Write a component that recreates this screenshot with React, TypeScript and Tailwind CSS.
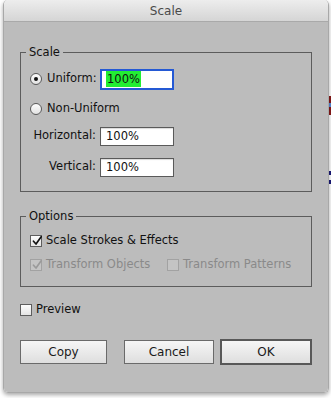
import React from "react";

const font = { fontFamily: '"DejaVu Sans", "Liberation Sans", sans-serif' };

function Check({ disabled }: { disabled?: boolean }) {
    return (
        <svg width="10" height="10" viewBox="0 0 10 10" className="absolute left-[1px] top-[0px]">
            <path
                d="M1.5 5.2 L4 8 L9.2 0.8"
                fill="none"
                stroke={disabled ? "#9a9a9a" : "#111"}
                strokeWidth="1.7"
                strokeLinecap="round"
                strokeLinejoin="round"
            />
        </svg>
    );
}

function CheckBox({ checked, disabled }: { checked?: boolean; disabled?: boolean }) {
    return (
        <span
            className={
                "relative inline-block w-[12px] h-[12px] shrink-0 border " +
                (disabled
                    ? "border-[#a2a2a2] bg-[#c4c4c4]"
                    : "border-[#5e5e5e] bg-gradient-to-b from-[#fdfdfd] to-[#e4e4e4]")
            }
        >
            {checked && <Check disabled={disabled} />}
        </span>
    );
}

function Radio({ checked }: { checked?: boolean }) {
    return (
        <span className="relative flex items-center justify-center w-[12px] h-[12px] shrink-0 rounded-full border border-[#5a5a5a] bg-gradient-to-b from-[#fdfdfd] to-[#e2e2e2]">
            {checked && <span className="w-[4px] h-[4px] rounded-full bg-[#111]" />}
        </span>
    );
}

function Field({ value, focused }: { value: string; focused?: boolean }) {
    if (focused) {
        return (
            <div className="w-[74px] h-[21px] border-2 border-[#2459d4] bg-white flex items-center pl-[4px]">
                <span className="bg-[#22ee33] text-[#111] leading-[16px] px-[1px]">{value}</span>
            </div>
        );
    }
    return (
        <div className="w-[74px] h-[19px] border border-[#5a5a5a] bg-white flex items-center pl-[5px] shadow-[inset_0_1px_1px_rgba(0,0,0,0.15)]">
            <span className="text-[#111] leading-[15px]">{value}</span>
        </div>
    );
}

function Button({ label, primary }: { label: string; primary?: boolean }) {
    return (
        <button
            className={
                "flex items-center justify-center bg-gradient-to-b from-[#f6f6f6] to-[#dedede] text-[#1a1a1a] text-[12px] " +
                (primary
                    ? "w-[92px] h-[26px] border-2 border-[#585858]"
                    : "w-[90px] h-[24px] border border-[#6a6a6a]")
            }
        >
            {label}
        </button>
    );
}

export default function App() {
    return (
        <div className="relative w-[331px] h-[398px] bg-white overflow-hidden" style={font}>
            {/* bits of the document behind the dialog */}
            <span className="absolute left-[33px] top-0 w-[5px] h-[3px] bg-[#1d5a1d]" />
            <span className="absolute right-0 top-[96px] w-[2px] h-[7px] bg-[#8a1a1a]" />
            <span className="absolute right-0 top-[103px] w-[2px] h-[4px] bg-[#5a8ad8]" />
            <span className="absolute right-0 top-[107px] w-[2px] h-[8px] bg-[#8a1a1a]" />
            <span className="absolute right-0 top-[171px] w-[2px] h-[4px] bg-[#1a1a7a]" />
            <span className="absolute right-0 top-[180px] w-[2px] h-[4px] bg-[#1a1a7a]" />

            {/* Window */}
            <div className="relative ml-[3px] w-[326px] h-[393px] rounded-[5px] overflow-hidden flex flex-col shadow-[0_2px_4px_rgba(0,0,0,0.35)] border-x border-b border-[#a8a8a8]">
                {/* Title bar */}
                <div className="h-[22px] shrink-0 flex items-center justify-center bg-gradient-to-b from-[#ededed] to-[#d5d5d5] border-b border-[#a9a9a9]">
                    <span className="text-[12px] text-[#4a4a4a]">Scale</span>
                </div>

                {/* Body */}
                <div className="flex-1 bg-[#bcbcbc] px-[16px] pt-[23px] text-[11.5px] text-[#111]">
                    {/* Scale group */}
                    <fieldset className="border border-[#5c5c5c] pb-[14px]">
                        <legend className="ml-[5px] px-[3px] leading-[15px]">Scale</legend>
                        <div className="flex flex-col pt-[8px]">
                            <div className="flex items-center h-[22px]">
                                <div className="w-[79px] flex items-center gap-[5px] pl-[9px]">
                                    <Radio checked />
                                    <span>Uniform:</span>
                                </div>
                                <Field value="100%" focused />
                            </div>
                            <div className="flex items-center h-[20px] mt-[9px]">
                                <div className="flex items-center gap-[5px] pl-[9px]">
                                    <Radio />
                                    <span>Non-Uniform</span>
                                </div>
                            </div>
                            <div className="flex items-center h-[20px] mt-[7px]">
                                <div className="w-[79px] text-right pr-[4px]">Horizontal:</div>
                                <Field value="100%" />
                            </div>
                            <div className="flex items-center h-[20px] mt-[11px]">
                                <div className="w-[79px] text-right pr-[4px]">Vertical:</div>
                                <Field value="100%" />
                            </div>
                        </div>
                    </fieldset>

                    {/* Options group */}
                    <fieldset className="border border-[#5c5c5c] mt-[17px] pb-[12px]">
                        <legend className="ml-[5px] px-[3px] leading-[15px]">Options</legend>
                        <div className="flex flex-col pt-[8px] pl-[9px]">
                            <div className="flex items-center gap-[4px] h-[18px]">
                                <CheckBox checked />
                                <span>Scale Strokes &amp; Effects</span>
                            </div>
                            <div className="flex items-center h-[18px] mt-[6px] text-[#8a8a8a]">
                                <div className="flex items-center gap-[4px] w-[137px]">
                                    <CheckBox checked disabled />
                                    <span>Transform Objects</span>
                                </div>
                                <div className="flex items-center gap-[4px]">
                                    <CheckBox disabled />
                                    <span>Transform Patterns</span>
                                </div>
                            </div>
                        </div>
                    </fieldset>

                    {/* Preview */}
                    <div className="flex items-center gap-[4px] h-[18px] mt-[14px]">
                        <CheckBox />
                        <span>Preview</span>
                    </div>

                    {/* Buttons */}
                    <div className="flex items-center h-[26px] mt-[20px]">
                        <Button label="Copy" />
                        <div className="ml-[17px]">
                            <Button label="Cancel" />
                        </div>
                        <div className="ml-[6px]">
                            <Button label="OK" primary />
                        </div>
                    </div>
                </div>
            </div>
        </div>
    );
}
